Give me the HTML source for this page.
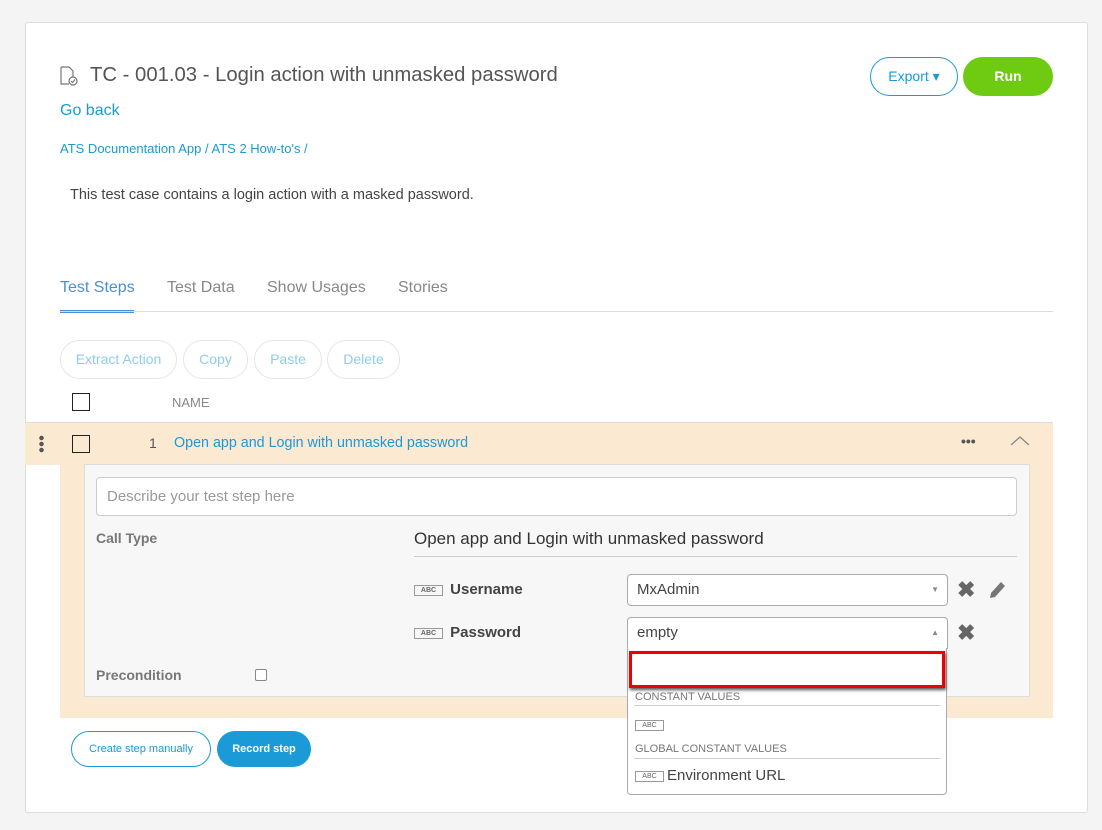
<!DOCTYPE html>
<html><head><style>
*{box-sizing:border-box;margin:0;padding:0}
body{width:1102px;height:830px;background:#f4f4f4;font-family:"Liberation Sans",sans-serif;position:relative;overflow:hidden}
.a{position:absolute}
.card{left:25px;top:22px;width:1063px;height:791px;background:#fff;border:1px solid #ddd;border-radius:3px}
.blue{color:#1a9ad6}
.pill{position:absolute;top:340px;height:39px;border:1px solid #e6e6e6;border-radius:20px;color:#8fcdee;font-size:14px;line-height:37px;text-align:center}
.cb{position:absolute;width:18px;height:18px;border:1.5px solid #222;background:transparent}
.abc{display:inline-block;border:1px solid #999;font-size:7px;color:#666;width:29px;text-align:center;line-height:9px;vertical-align:middle;margin-right:3px}
.sel{position:absolute;left:627px;width:321px;height:32px;border:1px solid #aaa;border-radius:4px;background:#fff;font-size:15px;color:#444;line-height:30px;padding-left:9px}
</style></head><body>
<div class="a card"></div>
<svg class="a" style="left:59px;top:66px" width="20" height="20" viewBox="0 0 20 20" fill="none" stroke="#777" stroke-width="1.2"><path d="M2 1h8l4 4v6M2 1v17h8"/><circle cx="14" cy="15" r="4"/><path d="M12 15l1.5 1.5 2.5-3"/></svg>
<div class="a" style="left:90px;top:64px;font-size:20.3px;color:#555">TC - 001.03 - Login action with unmasked password</div>
<div class="a blue" style="left:60px;top:102px;font-size:16px">Go back</div>
<div class="a blue" style="left:60px;top:141px;font-size:13px">ATS Documentation App / ATS 2 How-to's /</div>
<div class="a" style="left:70px;top:187px;font-size:14.5px;color:#444">This test case contains a login action with a masked password.</div>
<div class="a" style="left:870px;top:57px;width:88px;height:39px;border:1px solid #1a9ad6;border-radius:20px;color:#1a9ad6;font-size:14px;line-height:37px;text-align:center">Export ▾</div>
<div class="a" style="left:963px;top:57px;width:90px;height:39px;background:#6fcb12;border-radius:20px;color:#fff;font-weight:bold;font-size:14px;line-height:39px;text-align:center">Run</div>
<div class="a" style="left:60px;top:279px;font-size:16px;color:#4a90d9">Test Steps</div>
<div class="a" style="left:60px;top:310px;width:74px;height:3px;background:#4a90d9"></div>
<div class="a" style="left:167px;top:279px;font-size:16px;color:#888">Test Data</div>
<div class="a" style="left:267px;top:279px;font-size:16px;color:#888">Show Usages</div>
<div class="a" style="left:398px;top:279px;font-size:16px;color:#888">Stories</div>
<div class="a" style="left:60px;top:311px;width:993px;height:1px;background:#ddd"></div>
<div class="pill" style="left:60px;width:117px">Extract Action</div>
<div class="pill" style="left:183px;width:65px">Copy</div>
<div class="pill" style="left:254px;width:68px">Paste</div>
<div class="pill" style="left:327px;width:73px">Delete</div>
<div class="cb" style="left:72px;top:393px"></div>
<div class="a" style="left:172px;top:395px;font-size:13px;color:#888">NAME</div>
<div class="a" style="left:25px;top:422px;width:1028px;height:1px;background:#ddd"></div>
<div class="a" style="left:25px;top:423px;width:1028px;height:42px;background:#fbe9d2"></div>
<div class="a" style="left:60px;top:465px;width:993px;height:253px;background:#fbe9d2"></div>
<div class="a" style="left:39px;top:435px;width:5px;height:18px;background:radial-gradient(circle,#555 2px,transparent 2.5px) 0 0/5px 6px"></div>
<div class="cb" style="left:72px;top:435px"></div>
<div class="a" style="left:149px;top:435px;font-size:14px;color:#555">1</div>
<div class="a blue" style="left:174px;top:435px;font-size:14.3px">Open app and Login with unmasked password</div>
<div class="a" style="left:961px;top:433px;font-size:14px;color:#555;font-weight:bold">•••</div>
<svg class="a" style="left:1010px;top:436px" width="20" height="10"><path d="M1 9l9-8 9 8" fill="none" stroke="#888" stroke-width="1.3"/></svg>
<div class="a" style="left:84px;top:464px;width:946px;height:233px;background:#f7f7f7;border:1px solid #ddd"></div>
<div class="a" style="left:96px;top:477px;width:921px;height:39px;background:#fff;border:1px solid #ccc;border-radius:4px;font-size:15px;color:#999;line-height:37px;padding-left:10px">Describe your test step here</div>
<div class="a" style="left:96px;top:530px;font-size:14px;color:#777;font-weight:bold">Call Type</div>
<div class="a" style="left:414px;top:529px;font-size:17px;color:#333">Open app and Login with unmasked password</div>
<div class="a" style="left:414px;top:556px;width:603px;height:1px;background:#ccc"></div>
<div class="a" style="left:414px;top:581px;font-size:15px;color:#444;font-weight:bold"><span class="abc">ABC</span> Username</div>
<div class="a" style="left:414px;top:624px;font-size:15px;color:#444;font-weight:bold"><span class="abc">ABC</span> Password</div>
<div class="sel" style="top:574px">MxAdmin<span style="position:absolute;right:8px;top:0;font-size:8px;color:#888">▼</span></div>
<div class="sel" style="top:617px;border-radius:4px 4px 0 0">empty<span style="position:absolute;right:8px;top:0;font-size:8px;color:#888">▲</span></div>
<div class="a" style="left:957px;top:577px;font-size:22px;color:#666;font-weight:bold">✖</div>
<div class="a" style="left:957px;top:620px;font-size:22px;color:#666;font-weight:bold">✖</div>
<svg class="a" style="left:988px;top:580px" width="18" height="20"><path d="M2 18l1-5 10-11 4 4-10 11z" fill="#777"/></svg>
<div class="a" style="left:96px;top:667px;font-size:14px;color:#777;font-weight:bold">Precondition</div>
<div class="a" style="left:255px;top:669px;width:12px;height:12px;border:1px solid #888;border-radius:2px;background:#fff"></div>
<div class="a" style="left:71px;top:731px;width:140px;height:36px;border:1px solid #1a9ad6;border-radius:18px;color:#1a9ad6;font-size:11px;line-height:34px;text-align:center">Create step manually</div>
<div class="a" style="left:217px;top:731px;width:94px;height:36px;background:#1a9ad6;border-radius:18px;color:#fff;font-weight:bold;font-size:11px;line-height:36px;text-align:center">Record step</div>
<div class="a" style="left:627px;top:648px;width:320px;height:147px;background:#fff;border:1px solid #aaa;border-top:none;border-radius:0 0 4px 4px"></div>
<div class="a" style="left:629px;top:651px;width:316px;height:37px;border:3px solid #e00;box-shadow:1px 2px 3px #555;background:#fff"></div>
<div class="a" style="left:635px;top:691px;font-size:11px;color:#777">CONSTANT VALUES</div>
<div class="a" style="left:634px;top:705px;width:306px;height:1px;background:#ccc"></div>
<div class="a" style="left:635px;top:717px"><span class="abc">ABC</span></div>
<div class="a" style="left:635px;top:743px;font-size:11px;color:#777">GLOBAL CONSTANT VALUES</div>
<div class="a" style="left:634px;top:758px;width:306px;height:1px;background:#ccc"></div>
<div class="a" style="left:635px;top:767px;font-size:15px;color:#444"><span class="abc">ABC</span>Environment URL</div>
</body></html>
